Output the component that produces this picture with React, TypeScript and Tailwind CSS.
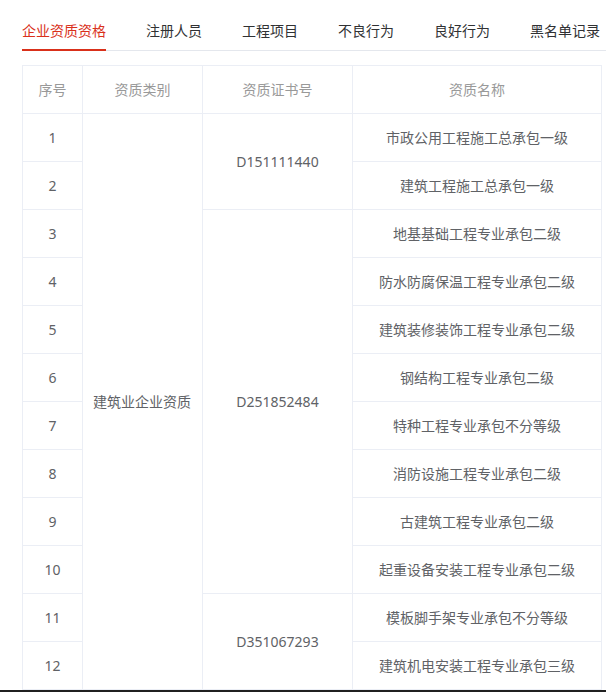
import React, { useState } from 'react';

const tabs = ['企业资质资格', '注册人员', '工程项目', '不良行为', '良好行为', '黑名单记录'];

// 资质证书分组
const groups = [
  { cert: 'D151111440', names: ['市政公用工程施工总承包一级', '建筑工程施工总承包一级'] },
  {
    cert: 'D251852484',
    names: [
      '地基基础工程专业承包二级',
      '防水防腐保温工程专业承包二级',
      '建筑装修装饰工程专业承包二级',
      '钢结构工程专业承包二级',
      '特种工程专业承包不分等级',
      '消防设施工程专业承包二级',
      '古建筑工程专业承包二级',
      '起重设备安装工程专业承包二级',
    ],
  },
  { cert: 'D351067293', names: ['模板脚手架专业承包不分等级', '建筑机电安装工程专业承包三级'] },
];

const totalRows = groups.reduce((n, g) => n + g.names.length, 0);

const App = () => {
  const [active, setActive] = useState(0);
  let index = 0;

  return (
    <div
      className="w-[606px] h-[692px] overflow-hidden bg-white flex flex-col"
      style={{ fontFamily: '"Noto Sans", "Noto Sans CJK SC", sans-serif' }}
    >
      <div className="flex-1 pl-[22px]">
        {/* Tabs */}
        <div className="flex gap-[40px] h-[51px] border-b border-[#e4e7ed] w-[600px] whitespace-nowrap">
          {tabs.map((tab, i) => (
            <button
              key={tab}
              onClick={() => setActive(i)}
              className={`pt-[20px] pb-[8px] text-[14px] leading-[21px] border-b-2 -mb-[1px] ${
                active === i ? 'text-[#d9301a] border-[#d9301a]' : 'text-[#303133] border-transparent'
              }`}
            >
              {tab}
            </button>
          ))}
        </div>

        {/* Table */}
        <table className="mt-[14px] w-[580px] border-collapse table-fixed text-[14px]">
          <colgroup>
            <col className="w-[60px]" />
            <col className="w-[120px]" />
            <col className="w-[150px]" />
            <col />
          </colgroup>
          <thead>
            <tr className="h-[48px] text-[#999]">
              <th className="border border-[#ebeef5] font-normal">序号</th>
              <th className="border border-[#ebeef5] font-normal">资质类别</th>
              <th className="border border-[#ebeef5] font-normal">资质证书号</th>
              <th className="border border-[#ebeef5] font-normal">资质名称</th>
            </tr>
          </thead>
          <tbody className="text-[#606266]">
            {groups.map((group, gi) =>
              group.names.map((name, ni) => {
                index += 1;
                return (
                  <tr key={name} className="h-[48px]">
                    <td className="border border-[#ebeef5] text-center">{index}</td>
                    {gi === 0 && ni === 0 && (
                      <td rowSpan={totalRows} className="border border-[#ebeef5] px-[10px]">
                        建筑业企业资质
                      </td>
                    )}
                    {ni === 0 && (
                      <td rowSpan={group.names.length} className="border border-[#ebeef5] text-center">
                        {group.cert}
                      </td>
                    )}
                    <td className="border border-[#ebeef5] text-center">{name}</td>
                  </tr>
                );
              })
            )}
          </tbody>
        </table>
      </div>
      <div className="h-[3px] bg-[#202020]" />
    </div>
  );
};

export default App;
